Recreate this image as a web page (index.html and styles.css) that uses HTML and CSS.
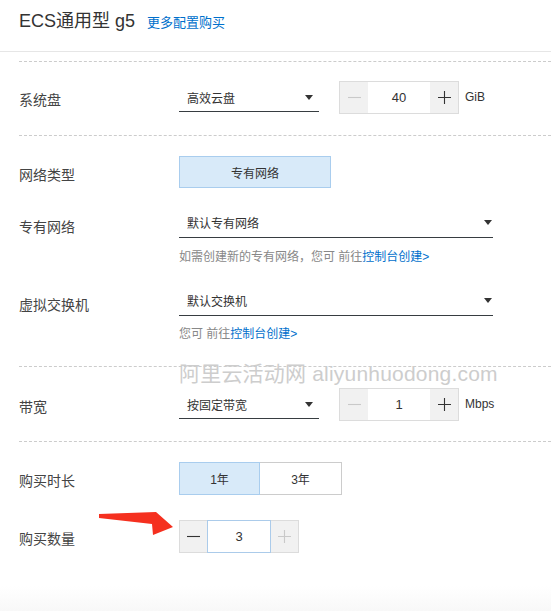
FILE: index.html
```html
<!DOCTYPE html>
<html lang="zh-CN">
<head>
<meta charset="utf-8">
<title>ECS通用型 g5</title>
<link rel="stylesheet" href="styles.css">
</head>
<body>
<div class="page">
  <header class="hd">
    <span class="title">ECS通用型 g5</span>
    <a class="more" href="#">更多配置购买</a>
  </header>

  <div class="main">
    <section class="sec s1">
      <div class="row">
        <div class="label">系统盘</div>
        <div class="sel sel-s"><span>高效云盘</span><i class="caret"></i></div>
        <div class="step step-gap">
          <div class="sbtn sbtn-l"><svg class="ico" viewBox="0 0 13 13"><path d="M0 6.5H13" class="dis"/></svg></div>
          <div class="sinp">40</div>
          <div class="sbtn sbtn-r"><svg class="ico" viewBox="0 0 13 13"><path d="M0 6.5H13M6.5 0V13" class="on"/></svg></div>
        </div>
        <span class="unit">GiB</span>
      </div>
    </section>

    <section class="sec s2">
      <div class="row">
        <div class="label">网络类型</div>
        <div class="opt opt-net">专有网络</div>
      </div>
      <div class="row row-b">
        <div class="label label-up">专有网络</div>
        <div class="col">
          <div class="sel sel-l"><span>默认专有网络</span><i class="caret"></i></div>
          <div class="hint hint1">如需创建新的专有网络，您可 前往<a href="#">控制台创建&gt;</a></div>
        </div>
      </div>
      <div class="row row-c">
        <div class="label label-up">虚拟交换机</div>
        <div class="col">
          <div class="sel sel-l"><span>默认交换机</span><i class="caret"></i></div>
          <div class="hint hint2">您可 前往<a href="#">控制台创建&gt;</a></div>
        </div>
      </div>
    </section>

    <section class="sec s3">
      <div class="row">
        <div class="label">带宽</div>
        <div class="sel sel-s"><span>按固定带宽</span><i class="caret"></i></div>
        <div class="step step-gap">
          <div class="sbtn sbtn-l"><svg class="ico" viewBox="0 0 13 13"><path d="M0 6.5H13" class="dis"/></svg></div>
          <div class="sinp">1</div>
          <div class="sbtn sbtn-r"><svg class="ico" viewBox="0 0 13 13"><path d="M0 6.5H13M6.5 0V13" class="on"/></svg></div>
        </div>
        <span class="unit">Mbps</span>
      </div>
    </section>

    <section class="sec s4">
      <div class="row">
        <div class="label">购买时长</div>
        <div class="seg">
          <div class="opt opt-y active">1年</div>
          <div class="opt opt-y">3年</div>
        </div>
      </div>
      <div class="row row-q">
        <div class="label">购买数量</div>
        <div class="step">
          <div class="sbtn sbtn-l q"><svg class="ico" viewBox="0 0 13 13"><path d="M0 6.5H13" class="on"/></svg></div>
          <div class="sinp qinp">3</div>
          <div class="sbtn sbtn-r q"><svg class="ico" viewBox="0 0 13 13"><path d="M0 6.5H13M6.5 0V13" class="dis"/></svg></div>
        </div>
      </div>
    </section>
  </div>

  <div class="watermark">阿里云活动网 aliyunhuodong.com</div>
  <svg class="arrow" viewBox="0 0 80 30" width="80" height="30">
    <polygon points="4,6 61,4 78,19 58,27 57,16 4,10" fill="#f5301f"/>
  </svg>
</div>
</body>
</html>
```

FILE: styles.css
```css
html, body {
  margin: 0;
  padding: 0;
}
body {
  font-family: "Liberation Sans", "Noto Sans CJK SC", sans-serif;
  color: #333;
  background: #fff;
}
.page {
  position: relative;
  width: 551px;
  min-height: 611px;
  overflow: hidden;
  background: linear-gradient(to bottom, #fff 0, #fff 586px, #f8f8f8 611px);
}
.hd {
  height: 51px;
  box-sizing: content-box;
  border-bottom: 1px solid #e6e6e6;
  padding-left: 19px;
  display: flex;
  align-items: baseline;
}
.title {
  font-size: 18px;
  line-height: 24px;
  padding-top: 9px;
  color: #333;
}
.more {
  margin-left: 12px;
  font-size: 13px;
  color: #0070cc;
  text-decoration: none;
}
.main {
  margin-top: 9px;
  padding-left: 19px;
}
.sec {
  border-top: 1px dashed #ccc;
}
.s1 { padding: 19px 0 21px; }
.s2 { padding: 20px 0 22px; }
.s3 { padding: 21px 0 20px; }
.s4 { padding: 20px 0 0; }

.row {
  display: flex;
  align-items: flex-start;
}
.row-b { margin-top: 22px; }
.row-c { margin-top: 21px; }
.row-q { margin-top: 25px; }

.label {
  width: 160px;
  flex: none;
  font-size: 14px;
  line-height: 20px;
  padding-top: 9px;
  color: #444;
}
.label-up { padding-top: 7px; }
.col {
  display: flex;
  flex-direction: column;
}
.sel {
  box-sizing: border-box;
  height: 28px;
  margin-top: 3px;
  border-bottom: 1px solid #373d41;
  display: flex;
  align-items: center;
  justify-content: space-between;
  padding-left: 8px;
  font-size: 12px;
  color: #333;
}
.col .sel { margin-top: 0; padding-bottom: 2px; }
.sel-s { width: 140px; padding-right: 6px; }
.sel-l { width: 314px; padding-right: 1px; }
.caret {
  width: 0;
  height: 0;
  border-left: 4px solid transparent;
  border-right: 4px solid transparent;
  border-top: 5px solid #333;
}
.hint {
  font-size: 12px;
  line-height: 20px;
  color: #888;
}
.hint a {
  color: #0070cc;
  text-decoration: none;
}
.hint1 { margin-top: 9px; }
.hint2 { margin-top: 8px; }

.step {
  display: flex;
  height: 33px;
  width: 120px;
}
.step-gap { margin-left: 20px; }
.sbtn {
  box-sizing: border-box;
  width: 29px;
  height: 33px;
  background: #f1f1f1;
  border-top: 1px solid #dcdcdc;
  border-bottom: 1px solid #dcdcdc;
  display: flex;
  align-items: center;
  justify-content: center;
}
.sbtn-l { border-left: 1px solid #dcdcdc; }
.sbtn-r { border-right: 1px solid #dcdcdc; }
.sbtn.q { width: 28px; }
.ico {
  width: 13px;
  height: 13px;
  display: block;
}
.ico .on { stroke: #333; stroke-width: 1.1; fill: none; }
.ico .dis { stroke: #c9c9c9; stroke-width: 1.1; fill: none; }
.sinp {
  box-sizing: border-box;
  flex: 1;
  height: 33px;
  border-top: 1px solid #dcdcdc;
  border-bottom: 1px solid #dcdcdc;
  background: #fff;
  font-size: 13px;
  display: flex;
  align-items: center;
  justify-content: center;
  color: #333;
}
.qinp {
  border: 1px solid #abcbea;
}
.unit {
  font-size: 12px;
  color: #333;
  margin-left: 6px;
  line-height: 33px;
}

.opt {
  box-sizing: border-box;
  height: 32px;
  font-size: 12px;
  display: flex;
  align-items: center;
  justify-content: center;
  color: #333;
  background: #fff;
  border: 1px solid #ccc;
}
.opt-net {
  width: 152px;
  background: #d8eaf9;
  border-color: #a9cdee;
}
.seg {
  display: flex;
}
.opt-y {
  height: 33px;
  width: 82px;
  border-left: none;
}
.opt-y.active {
  width: 81px;
  background: #d8eaf9;
  border: 1px solid #a9cdee;
}

.watermark {
  position: absolute;
  left: 179px;
  top: 361px;
  font-size: 21px;
  line-height: 26px;
  color: #cdcdcd;
  white-space: nowrap;
  letter-spacing: 0.2px;
}
.arrow {
  position: absolute;
  left: 95px;
  top: 508px;
}
```
